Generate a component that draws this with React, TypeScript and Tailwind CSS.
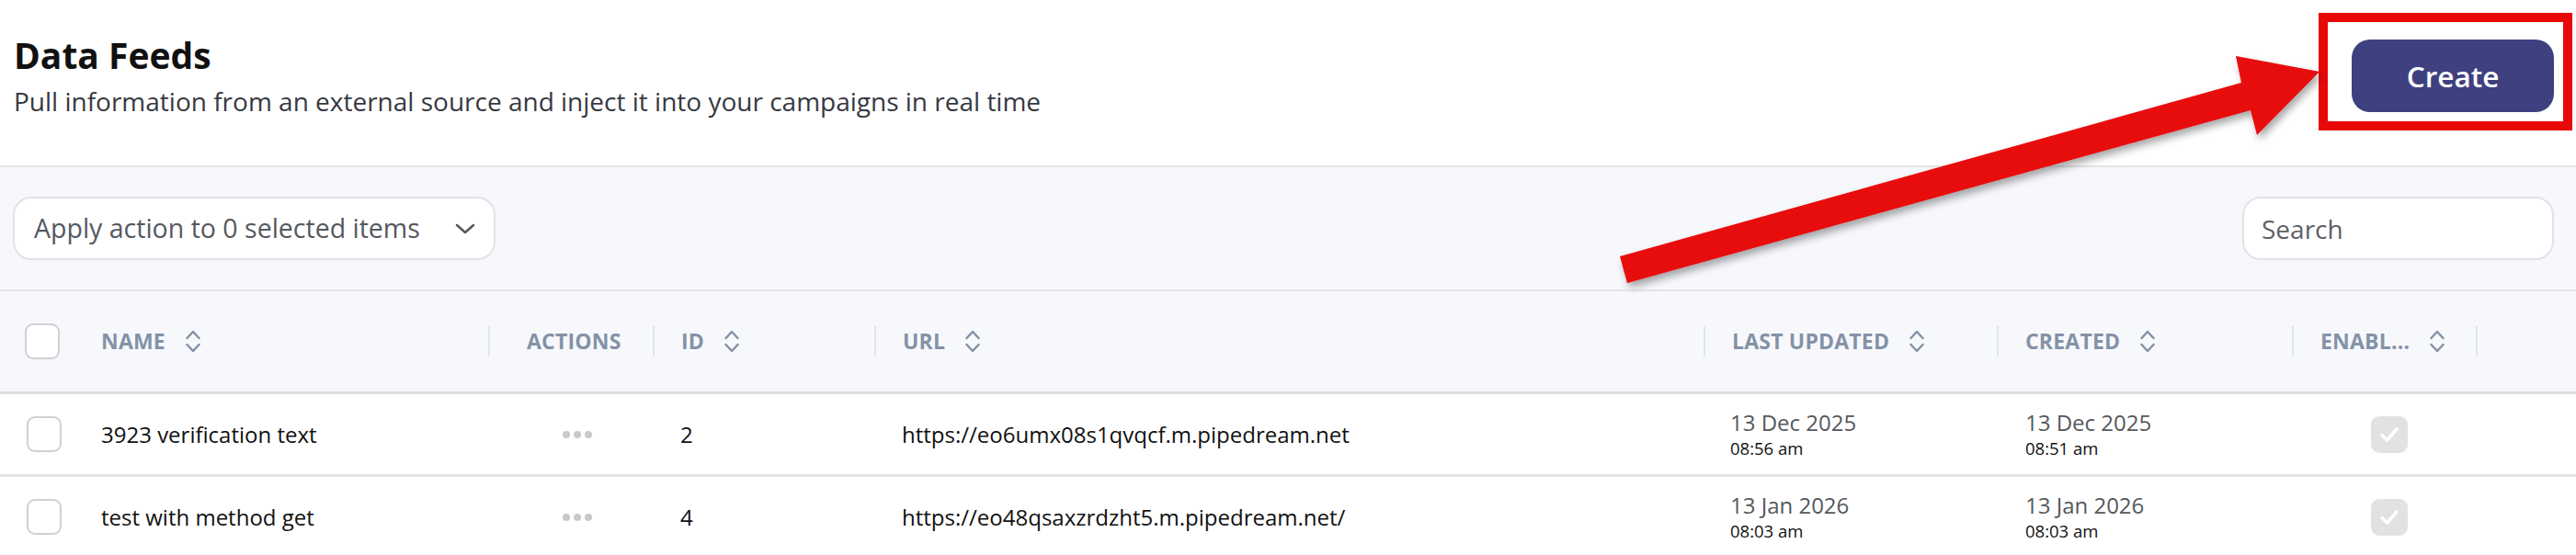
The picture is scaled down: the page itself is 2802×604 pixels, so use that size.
import React from 'react';

interface Feed {
  id: number;
  name: string;
  url: string;
  updatedDate: string;
  updatedTime: string;
  createdDate: string;
  createdTime: string;
  enabled: boolean;
}

const feeds: Feed[] = [
  {
    id: 2,
    name: '3923 verification text',
    url: 'https://eo6umx08s1qvqcf.m.pipedream.net',
    updatedDate: '13 Dec 2025',
    updatedTime: '08:56 am',
    createdDate: '13 Dec 2025',
    createdTime: '08:51 am',
    enabled: true
  },
  {
    id: 4,
    name: 'test with method get',
    url: 'https://eo48qsaxzrdzht5.m.pipedream.net/',
    updatedDate: '13 Jan 2026',
    updatedTime: '08:03 am',
    createdDate: '13 Jan 2026',
    createdTime: '08:03 am',
    enabled: true
  }
];

const cols = 'grid grid-cols-[80px_451px_179px_241px_902px_319px_321px_200px_1fr]';

const SortIcon = () => (
  <svg width="16" height="25" viewBox="0 0 16 25" fill="none" className="ml-[22px] shrink-0">
    <path d="M1.5 9 L8 2 L14.5 9" stroke="#8492a6" strokeWidth="2.5" strokeLinecap="round" strokeLinejoin="round" />
    <path d="M1.5 16 L8 23 L14.5 16" stroke="#8492a6" strokeWidth="2.5" strokeLinecap="round" strokeLinejoin="round" />
  </svg>
);

const HeadCell = ({ label, sort = true, divider = true, pad = 'pl-[29px]' }: { label?: string; sort?: boolean; divider?: boolean; pad?: string }) => (
  <div className="flex items-center">
    <div className={`flex h-[33px] items-center ${divider ? 'border-l-2 border-[#e1e4ea]' : ''} ${pad}`}>
      {label && <span className="text-[23px] font-bold text-[#8492a6] tracking-[0.2px]">{label}</span>}
      {label && sort && <SortIcon />}
    </div>
  </div>
);

const Checkbox = () => (
  <div className="w-[38px] h-[39px] rounded-[9px] border-2 border-[#cfd1d4] bg-white" />
);

const EnabledBox = () => (
  <div className="w-[40px] h-[40px] rounded-[9px] bg-[#e2e2e2] flex items-center justify-center">
    <svg width="22" height="18" viewBox="0 0 22 18" fill="none">
      <path d="M3 9.5 L8.5 15 L19 3" stroke="white" strokeWidth="3.5" strokeLinecap="round" strokeLinejoin="round" />
    </svg>
  </div>
);

export default function App() {
  return (
    <div className="relative h-[604px] w-[2802px] overflow-hidden bg-white font-['Open_Sans',sans-serif]">
      {/* Page header */}
      <div className="h-[180px] flex items-start justify-between pl-[15px]">
        <div className="pt-[34px]">
          <h1 className="text-[39px] leading-[52px] font-bold text-[#111]">Data Feeds</h1>
          <p className="mt-[6px] text-[28px] leading-[36px] text-[#363941]">
            Pull information from an external source and inject it into your campaigns in real time
          </p>
        </div>
        <button className="mt-[43px] mr-[24px] w-[220px] h-[79px] rounded-[20px] bg-[#3f4080] text-white text-[31.5px] font-semibold">
          Create
        </button>
      </div>

      {/* Toolbar */}
      <div className="h-[137px] bg-[#f7f8fc] border-t-2 border-b-2 border-[#e3e5ea] flex items-center justify-between px-[14px]">
        <div className="w-[525px] h-[69px] rounded-[20px] border-2 border-[#e1e3e8] bg-white flex items-center pl-[21px] pr-[20px]">
          <span className="text-[28.5px] text-[#55595f]">Apply action to 0 selected items</span>
          <svg width="22" height="12" viewBox="0 0 22 12" fill="none" className="ml-auto">
            <path d="M2 2 L11 10 L20 2" stroke="#55595f" strokeWidth="2.5" strokeLinecap="round" strokeLinejoin="round" />
          </svg>
        </div>
        <div className="w-[339px] h-[69px] rounded-[20px] border-2 border-[#e1e3e8] bg-white flex items-center pl-[19px] mr-[10px]">
          <span className="text-[28px] text-[#5d6066]">Search</span>
        </div>
      </div>

      {/* Table header */}
      <div className={`${cols} h-[112px] bg-[#f7f8fc] border-b-[3px] border-[#dcdee2]`}>
        <div className="flex items-center pl-[27px]">
          <Checkbox />
        </div>
        <HeadCell label="NAME" divider={false} pad="pl-[30px]" />
        <HeadCell label="ACTIONS" sort={false} pad="pl-[40px]" />
        <HeadCell label="ID" />
        <HeadCell label="URL" />
        <HeadCell label="LAST UPDATED" />
        <HeadCell label="CREATED" />
        <HeadCell label="ENABL..." />
        <HeadCell />
      </div>

      {/* Rows */}
      {feeds.map((feed) => (
        <div key={feed.id} className={`${cols} h-[90px] border-b-[3px] border-[#e3e3e3] text-[#111]`}>
          <div className="flex items-center pl-[29px]">
            <Checkbox />
          </div>
          <div className="flex items-center pl-[30px] text-[24px]">{feed.name}</div>
          <div className="flex items-center pl-[81px] gap-[4px]">
            <span className="w-[8px] h-[8px] rounded-full bg-[#c9c9c9]" />
            <span className="w-[8px] h-[8px] rounded-full bg-[#c9c9c9]" />
            <span className="w-[8px] h-[8px] rounded-full bg-[#c9c9c9]" />
          </div>
          <div className="flex items-center pl-[30px] text-[24px]">{feed.id}</div>
          <div className="flex items-center pl-[30px] text-[24px]">{feed.url}</div>
          <div className="flex flex-col justify-center pl-[29px]">
            <span className="text-[24px] leading-[31px] text-[#55585d]">{feed.updatedDate}</span>
            <span className="text-[18.5px] leading-[26px]">{feed.updatedTime}</span>
          </div>
          <div className="flex flex-col justify-center pl-[31px]">
            <span className="text-[24px] leading-[31px] text-[#55585d]">{feed.createdDate}</span>
            <span className="text-[18.5px] leading-[26px]">{feed.createdTime}</span>
          </div>
          <div className="flex items-center pl-[86px]">
            {feed.enabled && <EnabledBox />}
          </div>
          <div />
        </div>
      ))}

      {/* Annotation: red box around Create */}
      <div className="absolute left-[2522px] top-[14px] w-[276px] h-[128px] border-[10px] border-[#e80808] pointer-events-none" />

      {/* Annotation: red arrow */}
      <svg className="absolute left-0 top-0 pointer-events-none" width="2802" height="604" viewBox="0 0 2802 604">
        <defs>
          <filter id="arrowShadow" x="-10%" y="-10%" width="120%" height="130%">
            <feDropShadow dx="3" dy="5" stdDeviation="4" floodColor="#000" floodOpacity="0.35" />
          </filter>
        </defs>
        <polygon
          points="1762,279 2438,90 2432,61 2523,78 2455,147 2448,120 1770,308"
          fill="#e80808"
          filter="url(#arrowShadow)"
        />
      </svg>
    </div>
  );
}
